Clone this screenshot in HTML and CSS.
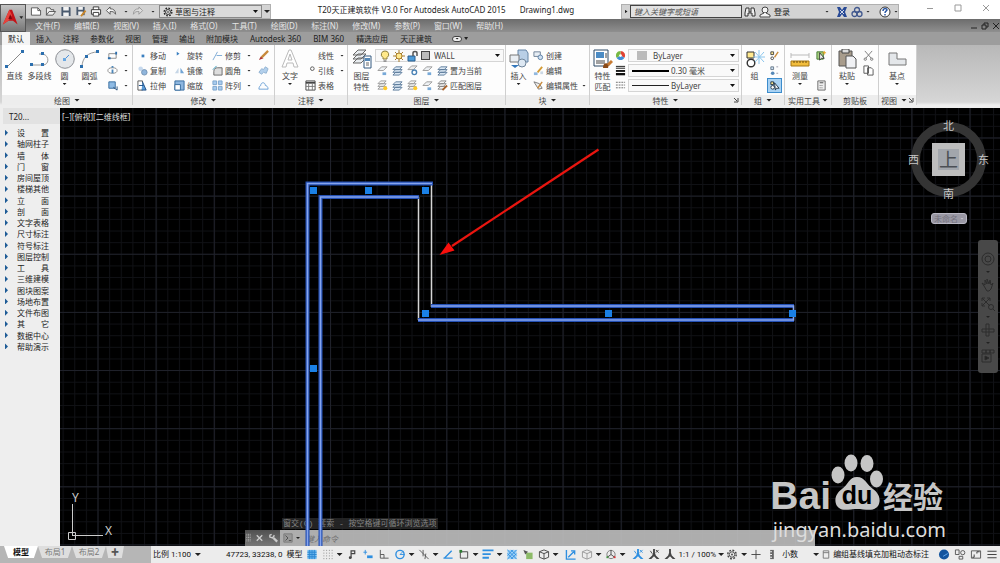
FILE: index.html
```html
<!DOCTYPE html>
<html lang="zh-CN">
<head>
  <meta charset="UTF-8" />
  <meta name="viewport" content="width=device-width, initial-scale=1.0" />
  <title>T20天正建筑软件 V3.0 - Drawing1.dwg</title>
  <link rel="stylesheet" href="styles.css">
</head>
<body>
  <!-- Icon sprite -->
  <svg class="sprite" aria-hidden="true">
    <symbol id="new" viewBox="0 0 12 12"><path d="M1 2h7l3 3v5H1z" fill="#fff" stroke="#555"/><path d="M8 2v3h3" fill="none" stroke="#555"/></symbol>
    <symbol id="open" viewBox="0 0 12 12"><path d="M1 10V2h4l1 2h3v2M1 10l3-4h7l-3 4z" fill="#eee" stroke="#555"/></symbol>
    <symbol id="save" viewBox="0 0 12 12"><path d="M1 1h9l1 1v9H1z" fill="#4a5a6e"/><path d="M3 1h6v4H3zM3 7h6v4H3z" fill="#f2f2f2"/></symbol>
    <symbol id="saveas" viewBox="0 0 12 12"><path d="M1 1h9v9H1z" fill="#4a5a6e"/><path d="M3 1h5v3H3zM3 6h5v4H3z" fill="#f2f2f2"/><path d="M6 11l5-6" stroke="#c8862a" stroke-width="2"/></symbol>
    <symbol id="print" viewBox="0 0 12 12"><path d="M3 4V1h6v3M1 4h10v5H1z" fill="#fff" stroke="#333"/><path d="M3 7h6v4H3z" fill="#fff" stroke="#333"/></symbol>
    <symbol id="undo" viewBox="0 0 12 12"><path d="M1 5l4-4v2c4 0 6 2 6 6-2-3-3-3-6-3v3z" fill="#f4f4f4" stroke="#555"/></symbol>
    <symbol id="redo" viewBox="0 0 12 12"><path d="M11 5L7 1v2C3 3 1 5 1 9c2-3 3-3 6-3v3z" fill="#ddd" stroke="#999"/></symbol>
    <symbol id="gear" viewBox="0 0 12 12"><circle cx="6" cy="6" r="4.600" fill="none" stroke="currentColor" stroke-width="1.600" stroke-dasharray="2 1.600"/><circle cx="6" cy="6" r="3" fill="none" stroke="currentColor"/><circle cx="6" cy="6" r="1" fill="currentColor"/></symbol>
    <symbol id="find" viewBox="0 0 12 12"><path d="M2 2h3v4h2V2h3l1 5v3H8V7H4v3H1V7z" fill="#eee" stroke="#333"/></symbol>
    <symbol id="user" viewBox="0 0 12 12"><circle cx="6" cy="4" r="3" fill="#f5f5f5" stroke="#444"/><path d="M5 7L1 9v2h10V9L7 7" fill="#f5f5f5" stroke="#444"/></symbol>
    <symbol id="exchange" viewBox="0 0 12 12"><path d="M1 1h3l2 3 2-3h3L9 6l2 5H8L6 8l-2 3H1l2-5z" fill="#284a96"/><path d="M4 4l4 4M8 4L4 8" stroke="#cfd8ea"/></symbol>
    <symbol id="a360" viewBox="0 0 12 12"><g fill="none" stroke="#41588e" stroke-width="1.300"><circle cx="6" cy="4" r="2.500"/><circle cx="3.500" cy="8" r="2.500"/><circle cx="8.500" cy="8" r="2.500"/></g></symbol>
    <symbol id="help" viewBox="0 0 12 12"><circle cx="6" cy="6" r="5" fill="#fff" stroke="#333"/><path d="M4 5c0-3 4-3 4-1 0 1-2 1-2 3M6 8v1.500" fill="none" stroke="#2451a0" stroke-width="1.400"/></symbol>

    <symbol id="line" viewBox="0 0 20 20"><path d="M2 18L18 2" stroke="#888" fill="none"/><path d="M0 16h3v3H0zM16 1h3v3h-3z" fill="#2c6fae"/></symbol>
    <symbol id="pline" viewBox="0 0 20 20"><path d="M1 16h12c6 0 7-9 0-11H9" stroke="#999" fill="none"/><path d="M0 14h3v3H0zM11 14h3v3h-3zM11 3h3v3h-3z" fill="#2c6fae"/></symbol>
    <symbol id="circle" viewBox="0 0 20 20"><circle cx="10" cy="10" r="9.300" fill="#e4e7ea" stroke="#8c8f94"/><path d="M9 11l5-5" stroke="#4a90d9"/><path d="M8 9h3v3H8z" fill="#69a7e2"/></symbol>
    <symbol id="arc" viewBox="0 0 20 20"><path d="M2 18C2 9 8 3 18 3" stroke="#999" fill="none"/><path d="M0 16h3v3H0zM5 6h3v3H5zM16 1h3v3h-3z" fill="#2c6fae"/></symbol>
    <symbol id="rect" viewBox="0 0 12 12"><path d="M2 4h8v5H2z" fill="#fff" stroke="#888"/><path d="M1 8h3v2H1zM9 2h2v3H9z" fill="#2c6fae"/></symbol>
    <symbol id="ellipse" viewBox="0 0 12 12"><ellipse cx="6" cy="6" rx="5" ry="3" fill="#fff" stroke="#888"/><path d="M5 5h2v4H5zM5 1h2v2H5z" fill="#4c86b8"/></symbol>
    <symbol id="hatch" viewBox="0 0 12 12"><path d="M2 2h7v7H2z" fill="#8fbbe4" stroke="#356a9c"/><path d="M7 8l4 3v-4" stroke="#234e79" fill="none"/></symbol>

    <symbol id="move" viewBox="0 0 12 12"><path d="M5 5h3v3H5z" fill="#3a7fc0"/></symbol>
    <symbol id="copy" viewBox="0 0 12 12"><circle cx="4" cy="4" r="2.500" fill="#c6d9ee"/><circle cx="8" cy="8" r="3" fill="#8fb5dc" stroke="#7493b2"/></symbol>
    <symbol id="stretch" viewBox="0 0 12 12"><path d="M1 1h5v10H1z" fill="#fff" stroke="#555"/><path d="M6 2l4 9H5M2 6h5" fill="#5a9ad6" stroke="#1e4f86"/></symbol>
    <symbol id="rotate" viewBox="0 0 12 12"><path d="M3 2l3 2-3 2" fill="#3a7fc0"/></symbol>
    <symbol id="mirror" viewBox="0 0 12 12"><path d="M5 3v6H1z" fill="#c6d6e6"/><path d="M7 3v6h4z" fill="#72a5d5"/></symbol>
    <symbol id="scale" viewBox="0 0 12 12"><path d="M1 1h10v10H1z" fill="#8db6df" stroke="#356a9c"/><path d="M1 5h6v6H1z" fill="#fff" stroke="#356a9c"/></symbol>
    <symbol id="trim" viewBox="0 0 12 12"><path d="M1 11L6 2M5 6h6" stroke="#79a8d4" fill="none"/></symbol>
    <symbol id="fillet" viewBox="0 0 12 12"><path d="M2 11V7c0-3 2-4 4-4h5v8z" fill="#ddd" stroke="#666"/><path d="M1 5l4-4" stroke="#39b"/></symbol>
    <symbol id="array" viewBox="0 0 12 12"><path d="M1 1h4v4H1zM7 1h4v4H7zM1 7h4v4H1zM7 7h4v4H7z" fill="#a8cbee" stroke="#7aa3cc"/></symbol>
    <symbol id="erase" viewBox="0 0 12 12"><path d="M1 11l2-4 3 2z" fill="#a33"/><path d="M4 8l7-7" stroke="#c88a3c" stroke-width="2.500"/></symbol>
    <symbol id="explode" viewBox="0 0 12 12"><path d="M1 8l3-4 2 1 2-3 3 2-2 5-3-1-2 2z" fill="#b3d0ec" stroke="#8fb0d0"/></symbol>
    <symbol id="offset" viewBox="0 0 12 12"><path d="M1 10h10c0-3-2-4-3-4 0-4-5-4-5 0-1 0-2 2-2 4z" fill="none" stroke="#6aa0d5"/></symbol>

    <symbol id="text" viewBox="0 0 20 20"><path d="M2 18L9 1h2l7 17h-4l-1-4H7l-1 4zM8 11h4l-2-6z" fill="#fff" stroke="#bbb"/></symbol>
    <symbol id="leader" viewBox="0 0 12 12"><circle cx="8" cy="4" r="2" fill="none" stroke="#555"/></symbol>
    <symbol id="table" viewBox="0 0 12 12"><path d="M1 1h10v10H1z" fill="#fff" stroke="#444"/><path d="M1 2h10v2H1z" fill="#444"/><path d="M1 7h10M4 4v7M8 4v7" stroke="#777"/></symbol>

    <symbol id="layers" viewBox="0 0 20 20"><path d="M1 6l5-5h8l-5 5zM1 10l5-5h8l-5 5zM1 14l5-5h8l-5 5z" fill="#e9edf0" stroke="#666"/><path d="M12 7h7v12h-7z" fill="#fff" stroke="#355b80"/><path d="M13 9h5v3h-5z" fill="#5589b9"/><path d="M14 14h3M14 16h3" stroke="#666"/></symbol>
    <symbol id="bulb" viewBox="0 0 12 12"><path d="M6 1a3.500 3.500 0 0 0-2 6.500V9h4V7.500A3.500 3.500 0 0 0 6 1z" fill="#ffe98a" stroke="#8a7d3c"/><path d="M4.500 11h3" stroke="#555"/></symbol>
    <symbol id="sun" viewBox="0 0 12 12"><path d="M6 0v12M0 6h12M2 2l8 8M10 2l-8 8" stroke="#a87e2e"/><circle cx="6" cy="6" r="3" fill="#ffe88d" stroke="#a87e2e"/></symbol>
    <symbol id="lock" viewBox="0 0 12 12"><path d="M1 6h7v5H1z" fill="#4d9bd8" stroke="#2b5f8f"/><path d="M6 6V3c0-2 4-2 4 0v3" fill="none" stroke="#555" stroke-width="1.500"/></symbol>
    <symbol id="layer" viewBox="0 0 12 12"><path d="M1 6l4-4h6L7 6z" fill="#eef1f4" stroke="#999"/><path d="M6 8h4v3H6z" fill="#77a9d8"/></symbol>
    <symbol id="layerset" viewBox="0 0 12 12"><path d="M1 5l3-3h7L8 5zM1 8l3-3h7L8 8zM1 11l3-3h7l-3 3z" fill="#dce8f4" stroke="#5c7b9a"/></symbol>
    <symbol id="layersun" viewBox="0 0 12 12"><path d="M1 4l3-3h6L7 4zM1 7l3-3h6L7 7zM1 10l3-3h6l-3 3z" fill="#f3f3f3" stroke="#999"/><circle cx="9" cy="9" r="2.200" fill="#ffc928"/></symbol>
    <symbol id="layerbrush" viewBox="0 0 12 12"><path d="M1 4l3-3h6L7 4zM1 7l3-3h6L7 7zM1 10l3-3h6l-3 3z" fill="#f3f3f3" stroke="#888"/><path d="M6 11l5-5" stroke="#a8622a" stroke-width="2"/></symbol>
    <symbol id="layergear" viewBox="0 0 12 12"><path d="M1 5l4-4h6L7 5z" fill="#eee" stroke="#999"/><circle cx="8" cy="8" r="2.500" fill="#fff" stroke="#4a82b5" stroke-width="1.500"/></symbol>

    <symbol id="insert" viewBox="0 0 20 20"><path d="M9 1h8l2 3v9H9z" fill="#b9cfe6" stroke="#6584a5"/><path d="M1 6h9v7H1z" fill="#e9eef3" stroke="#777"/><circle cx="13" cy="14" r="4" fill="#dde8f3" stroke="#70859b"/><path d="M6 19l-4-3h8z" fill="#3377bb"/></symbol>
    <symbol id="create" viewBox="0 0 12 12"><path d="M1 2h7v5H1z" fill="#e6edf4" stroke="#6b7f95"/><circle cx="8" cy="8" r="2.500" fill="#cfe0f1" stroke="#5a7fa5"/></symbol>
    <symbol id="edit" viewBox="0 0 12 12"><path d="M1 8h4v3H1z" fill="#91b8df"/><path d="M5 8l5-6" stroke="#d39b35" stroke-width="2"/><path d="M8 7h3v3H8z" fill="#ccd9e6"/></symbol>
    <symbol id="attr" viewBox="0 0 12 12"><path d="M1 2l6 2 3 5-4 1z" fill="#eee" stroke="#777"/><path d="M5 9l5-7" stroke="#c88a3c" stroke-width="1.500"/></symbol>

    <symbol id="match" viewBox="0 0 20 20"><path d="M1 1h14v16H1z" fill="#fff" stroke="#2d4864"/><path d="M3 3h8v6H3z" fill="#4b8bc4"/><path d="M3 12h9M3 14h9M13 4v5" stroke="#444"/><path d="M10 19c0-4 2-6 6-4l-1 4z" fill="#8a4a18"/><path d="M15 16l4-4" stroke="#c87a31" stroke-width="3"/></symbol>
    <symbol id="wheel" viewBox="0 0 12 12"><path d="M6 6V1a5 5 0 0 1 4.300 7.500z" fill="#e04334"/><path d="M6 6l4.300 2.500A5 5 0 0 1 1.700 8.500z" fill="#3f8ed8"/><path d="M6 6L1.700 8.500A5 5 0 0 1 6 1z" fill="#77b843"/><circle cx="6" cy="6" r="1.500" fill="#fff"/></symbol>
    <symbol id="weights" viewBox="0 0 12 12"><path d="M1 1.500h10M1 3.500h10" stroke="#111"/><path d="M1 6.500h10" stroke="#111" stroke-width="2"/><path d="M1 10h10" stroke="#111" stroke-width="2.500"/></symbol>
    <symbol id="dashes" viewBox="0 0 12 12"><path d="M1 2.500h10M1 5.500h10M1 8.500h10" stroke="#666" stroke-dasharray="2 1"/></symbol>

    <symbol id="group" viewBox="0 0 20 20"><path d="M2 3h7v6H2z" fill="#ffe98f" stroke="#333"/><circle cx="6" cy="14" r="3.800" fill="#fff" stroke="#333" stroke-width="1.400"/><path d="M14 1v14M8 8h12M10 3l9 10M19 3l-9 10" stroke="#8cc6ec"/></symbol>
    <symbol id="ungroup" viewBox="0 0 12 12"><path d="M2 2h3v3H2z" fill="#ffe98f" stroke="#444"/><circle cx="3.500" cy="9" r="1.500" fill="none" stroke="#444"/><path d="M6 8l4-6" stroke="#c88a3c" stroke-width="1.500"/></symbol>
    <symbol id="groupedit" viewBox="0 0 12 12"><path d="M2 2h3v3H2z" fill="#cfe0f1" stroke="#678"/><circle cx="4" cy="9" r="2" fill="#5588b8"/><path d="M8 2h2M8 9h2" stroke="#99a"/></symbol>
    <symbol id="groupsel" viewBox="0 0 12 12"><path d="M2 2h3v3H2z" fill="#ffe98f" stroke="#234"/><circle cx="4" cy="8" r="2" fill="#fff" stroke="#234"/><path d="M6 3l5 6H8l-1 2z" fill="#fff" stroke="#234"/></symbol>
    <symbol id="measure" viewBox="0 0 20 20"><path d="M1 4v5M19 4v5M1 6h18" stroke="#bbb"/><path d="M1 12h18v5H1z" fill="#f2bd3c" stroke="#a77816"/><path d="M4 12v2M7 12v2M10 12v2M13 12v2M16 12v2" stroke="#6b4c0e"/></symbol>
    <symbol id="quick" viewBox="0 0 12 12"><path d="M1 2h7v8H1z" fill="#a9cf83" stroke="#3e7a2c"/><path d="M4 3l5 6H6l-2 2z" fill="#fff" stroke="#333"/><path d="M9 1v4M7 3h4" stroke="#e6a21a"/></symbol>
    <symbol id="calc" viewBox="0 0 12 12"><path d="M2 1h8v10H2z" fill="#eee" stroke="#666"/><path d="M4 3h4" stroke="#444"/><path d="M4 6h4M4 8.500h4" stroke="#666" stroke-dasharray="1 1"/></symbol>
    <symbol id="paste" viewBox="0 0 20 20"><path d="M2 2h13v15H2z" fill="#a89c8c" stroke="#555"/><path d="M5 0h7v4H5z" fill="#ddd" stroke="#444"/><path d="M9 7h7l3 3v9H9z" fill="#f0f1f4" stroke="#555"/></symbol>
    <symbol id="cut" viewBox="0 0 12 12"><path d="M2 1l7 8M10 1L3 9" stroke="#777" fill="none"/><circle cx="2.500" cy="10" r="1.300" fill="none" stroke="#777"/><circle cx="9.500" cy="10" r="1.300" fill="none" stroke="#777"/></symbol>
    <symbol id="copyclip" viewBox="0 0 12 12"><path d="M1 1h5v8H1zM5 3h4l2 2v6H5z" fill="#fff" stroke="#555"/></symbol>
    <symbol id="base" viewBox="0 0 20 20"><path d="M2 4h8v6h9v6H2z" fill="#e4e7ea" stroke="#777"/></symbol>

    <symbol id="s-grid" viewBox="0 0 12 12"><path d="M1 1h10v10H1z" fill="#6fbaf0"/><path d="M1 3.500h10M1 6h10M1 8.500h10M3.500 1v10M6 1v10M8.500 1v10" stroke="#2a86d0"/></symbol>
    <symbol id="s-snap" viewBox="0 0 12 12"><path d="M1 1.500h10M1 4.500h10M1 7.500h10M1 10.500h10" stroke="#888" stroke-dasharray="1 2"/></symbol>
    <symbol id="s-infer" viewBox="0 0 12 12"><path d="M5 10V2h4v3H5" fill="none" stroke="#444" stroke-width="1.300"/><circle cx="4" cy="9.500" r="1.500" fill="#444"/></symbol>
    <symbol id="s-dyn" viewBox="0 0 12 12"><path d="M3 1v5M1 3.500h4" stroke="#2f8fe0"/><path d="M5 7h6v3H5z" fill="#2f8fe0"/></symbol>
    <symbol id="s-ortho" viewBox="0 0 12 12"><path d="M2 1v9h9M2 6h4v4" fill="none" stroke="#555"/></symbol>
    <symbol id="s-polar" viewBox="0 0 12 12"><circle cx="6" cy="6" r="4.500" fill="none" stroke="#2f8fe0" stroke-width="1.500"/><path d="M6 6h5M6 6l4-4" stroke="#2f8fe0"/></symbol>
    <symbol id="s-iso" viewBox="0 0 12 12"><path d="M1 1l10 10M5 1v7M7 11l1-6" stroke="#555" fill="none"/></symbol>
    <symbol id="s-track" viewBox="0 0 12 12"><path d="M1 10h10M2 10l8-8" stroke="#2f8fe0" stroke-width="1.500"/></symbol>
    <symbol id="s-osnap" viewBox="0 0 12 12"><path d="M2 3h8v7H2z" fill="none" stroke="#444"/><path d="M1 1h3v3H1z" fill="#2e7d32"/></symbol>
    <symbol id="s-lwt" viewBox="0 0 12 12"><path d="M0 1.500h12M0 5.500h9M0 9.500h7" stroke="#2f8fe0" stroke-width="2"/></symbol>
    <symbol id="s-trans" viewBox="0 0 12 12"><path d="M1 1h10v10H1z" fill="#9ed0f5"/><path d="M1 1l10 10M5 1l6 6M1 5l6 6M11 1L1 11M7 1L1 7M11 5l-6 6" stroke="#2f8fe0"/></symbol>
    <symbol id="s-cycle" viewBox="0 0 12 12"><path d="M4 4h7v7H4z" fill="#8dbb68"/><path d="M1 1l5 2-3 3z" fill="#555"/></symbol>
    <symbol id="s-3d" viewBox="0 0 12 12"><path d="M6 1l5 2v6l-5 2-5-2V3zM1 3l5 2 5-2M6 5v6" fill="none" stroke="currentColor"/></symbol>
    <symbol id="s-ucs" viewBox="0 0 12 12"><path d="M1 1v10h10M3 9l6-6M6 2h4v4" fill="none" stroke="#2f8fe0" stroke-width="1.500"/></symbol>
    <symbol id="s-gizmo" viewBox="0 0 12 12"><circle cx="6" cy="6" r="4.500" fill="none" stroke="#777"/><path d="M6 6V1M6 6l4 3M6 6L2 9" stroke="#444"/><path d="M9 8h2v2H9z" fill="#d33"/><path d="M1 8h2v2H1z" fill="#494"/></symbol>
    <symbol id="s-man" viewBox="0 0 12 12"><path d="M5 0h2v4l1 3 4 4H9L6 8l-3 3H0l4-4 1-3z" fill="currentColor"/></symbol>
    <symbol id="s-manx" viewBox="0 0 12 12"><path d="M5 0h2v4l1 3 4 4H9L6 8l-3 3H0l4-4 1-3z" fill="currentColor"/><path d="M8 1l3 3M11 1L8 4M2 2l2 3" stroke="currentColor"/></symbol>
    <symbol id="s-units" viewBox="0 0 12 12"><path d="M4 1h4v10H4z" fill="#666"/><path d="M4 3h2M4 6h2M4 9h2" stroke="#fff"/></symbol>
    <symbol id="s-props" viewBox="0 0 12 12"><path d="M3 2h6v8H3zM3 4h6" fill="#eee" stroke="#777"/></symbol>
    <symbol id="s-hw" viewBox="0 0 12 12"><circle cx="6" cy="6" r="5.500" fill="#14559f"/><path d="M5 8l5-3" stroke="#6aaef0"/></symbol>
    <symbol id="s-isolate" viewBox="0 0 12 12"><path d="M1 1h4v5H1zM5 8h4v3H5z" fill="none" stroke="#555"/><circle cx="9" cy="4" r="2.300" fill="none" stroke="#555"/></symbol>
    <symbol id="s-full" viewBox="0 0 12 12"><path d="M1 2h10v8H1z" fill="none" stroke="#555"/><path d="M7 5V3h3M4 6v3H2" stroke="#333" fill="none"/></symbol>
    <symbol id="s-menu" viewBox="0 0 12 12"><path d="M1 2.500h10M1 6h10M1 9.500h10" stroke="#444" stroke-width="1.200"/></symbol>
  </svg>

  <header>
    <button class="app" aria-label="应用程序"><svg viewBox="0 0 26 26"><path d="M2 20L9 4h3l6 16-5-4H8z" fill="#c41318"/><path d="M9 4l3 6-4 6-6 4z" fill="#e8433c"/><path d="M8 14h4l-2-5z" fill="#7a0b10"/><path d="M20 11h4l-2 3z" fill="#222"/></svg></button>
    <div class="titlebar">
      <div class="quick">
        <button aria-label="新建"><svg><use href="#new"/></svg></button>
        <button aria-label="打开"><svg><use href="#open"/></svg></button>
        <button aria-label="保存"><svg><use href="#save"/></svg></button>
        <button aria-label="另存为"><svg><use href="#saveas"/></svg></button>
        <button aria-label="打印"><svg><use href="#print"/></svg></button>
        <button aria-label="放弃"><svg><use href="#undo"/></svg></button>
        <i class="arrow small"></i>
        <button aria-label="重做"><svg><use href="#redo"/></svg></button>
        <i class="arrow small"></i>
        <label class="combo workspace"><svg><use href="#gear"/></svg><select aria-label="工作空间"><option>草图与注释</option></select></label>
        <i class="arrow"></i>
      </div>
      <h1><span>T20天正建筑软件 V3.0 For Autodesk AutoCAD 2015</span><span>Drawing1.dwg</span></h1>
      <div class="search">
        <button class="expand" aria-label="展开"></button>
        <input type="text" placeholder="键入关键字或短语" aria-label="搜索">
        <div class="account">
          <svg><use href="#find"/></svg>
          <svg><use href="#user"/></svg>
          <button class="signin">登录<i class="arrow small"></i></button>
          <svg><use href="#exchange"/></svg>
          <svg><use href="#a360"/></svg><i class="arrow small"></i>
          <svg class="help"><use href="#help"/></svg><i class="arrow small"></i>
        </div>
      </div>
      <div class="window">
        <button aria-label="最小化"><svg viewBox="0 0 8 8"><path d="M1 4.500h6"/></svg></button>
        <button aria-label="最大化"><svg viewBox="0 0 8 8"><path d="M1 1h6v6H1z"/></svg></button>
        <button aria-label="关闭"><svg viewBox="0 0 8 8"><path d="M1 1l6 6M7 1L1 7"/></svg></button>
      </div>
    </div>
    <nav class="menu">
      <a href="#">文件(F)</a><a href="#">编辑(E)</a><a href="#">视图(V)</a><a href="#">插入(I)</a><a href="#">格式(O)</a><a href="#">工具(T)</a><a href="#">绘图(D)</a><a href="#">标注(N)</a><a href="#">修改(M)</a><a href="#">参数(P)</a><a href="#">窗口(W)</a><a href="#">帮助(H)</a>
      <div class="doc">
        <svg viewBox="0 0 8 8"><path d="M1 6h6"/></svg>
        <svg viewBox="0 0 8 8"><path d="M3 3V1h4v4H5M1 3h4v4H1z"/></svg>
        <svg viewBox="0 0 8 8"><path d="M1 1l6 6M7 1L1 7"/></svg>
      </div>
    </nav>
  </header>

  <nav class="tabs">
    <a class="active" href="#">默认</a><a href="#">插入</a><a href="#">注释</a><a href="#">参数化</a><a href="#">视图</a><a href="#">管理</a><a href="#">输出</a><a href="#">附加模块</a><a href="#">Autodesk 360</a><a href="#">BIM 360</a><a href="#">精选应用</a><a href="#">天正建筑</a>
    <button class="pill" aria-label="功能区选项"><i class="arrow"></i></button><i class="arrow"></i>
  </nav>

  <div class="ribbon">
    <section class="panel draw">
      <div class="tools">
        <button class="big"><svg><use href="#line"/></svg>直线</button>
        <button class="big"><svg><use href="#pline"/></svg>多段线</button>
        <button class="big"><svg><use href="#circle"/></svg>圆<i class="arrow small"></i></button>
        <button class="big"><svg><use href="#arc"/></svg>圆弧<i class="arrow small"></i></button>
        <div class="grid">
          <button aria-label="矩形"><svg><use href="#rect"/></svg><i class="arrow small"></i></button>
          <button aria-label="椭圆"><svg><use href="#ellipse"/></svg><i class="arrow small"></i></button>
          <button aria-label="图案填充"><svg><use href="#hatch"/></svg><i class="arrow small"></i></button>
        </div>
      </div>
      <h2>绘图<i class="arrow"></i></h2>
    </section>

    <section class="panel modify">
      <div class="tools">
        <div class="grid">
          <button><svg><use href="#move"/></svg>移动</button>
          <button><svg><use href="#copy"/></svg>复制</button>
          <button><svg><use href="#stretch"/></svg>拉伸</button>
          <button><svg><use href="#rotate"/></svg>旋转</button>
          <button><svg><use href="#mirror"/></svg>镜像</button>
          <button><svg><use href="#scale"/></svg>缩放</button>
          <button><svg><use href="#trim"/></svg>修剪<i class="arrow small"></i></button>
          <button><svg><use href="#fillet"/></svg>圆角<i class="arrow small"></i></button>
          <button><svg><use href="#array"/></svg>阵列<i class="arrow small"></i></button>
          <button aria-label="删除"><svg><use href="#erase"/></svg></button>
          <button aria-label="分解"><svg><use href="#explode"/></svg></button>
          <button aria-label="偏移"><svg><use href="#offset"/></svg></button>
        </div>
      </div>
      <h2>修改<i class="arrow"></i></h2>
    </section>

    <section class="panel annotate">
      <div class="tools">
        <button class="big"><svg><use href="#text"/></svg>文字<i class="arrow small"></i></button>
        <div class="grid">
          <button><svg></svg>线性<i class="arrow small"></i></button>
          <button><svg><use href="#leader"/></svg>引线<i class="arrow small"></i></button>
          <button><svg><use href="#table"/></svg>表格</button>
        </div>
      </div>
      <h2>注释<i class="arrow"></i></h2>
    </section>

    <section class="panel layer">
      <div class="tools">
        <button class="big"><svg><use href="#layers"/></svg>图层<br>特性</button>
        <div class="rows">
          <label class="combo"><svg><use href="#bulb"/></svg><svg><use href="#sun"/></svg><svg><use href="#lock"/></svg><b class="swatch"></b><select aria-label="图层"><option>WALL</option></select></label>
          <div class="row">
            <svg><use href="#layer"/></svg><svg><use href="#layerset"/></svg><svg><use href="#layergear"/></svg><svg><use href="#layer"/></svg>
            <button><svg><use href="#layerset"/></svg>置为当前</button>
          </div>
          <div class="row">
            <svg><use href="#layersun"/></svg><svg><use href="#layerset"/></svg><svg><use href="#layersun"/></svg><svg><use href="#layer"/></svg>
            <button><svg><use href="#layerbrush"/></svg>匹配图层</button>
          </div>
        </div>
      </div>
      <h2>图层<i class="arrow"></i></h2>
    </section>

    <section class="panel block">
      <div class="tools">
        <button class="big"><svg><use href="#insert"/></svg>插入<i class="arrow small"></i></button>
        <div class="grid">
          <button><svg><use href="#create"/></svg>创建</button>
          <button><svg><use href="#edit"/></svg>编辑</button>
          <button><svg><use href="#attr"/></svg>编辑属性<i class="arrow small"></i></button>
        </div>
      </div>
      <h2>块<i class="arrow"></i></h2>
    </section>

    <section class="panel props">
      <div class="tools">
        <button class="big"><svg><use href="#match"/></svg>特性<br>匹配</button>
        <div class="rows">
          <div class="row"><svg><use href="#wheel"/></svg><label class="combo"><b class="swatch plain"></b><select aria-label="颜色"><option>ByLayer</option></select></label></div>
          <div class="row"><svg><use href="#weights"/></svg><label class="combo"><b class="stroke thick"></b><select aria-label="线宽"><option>0.30 毫米</option></select></label></div>
          <div class="row"><svg><use href="#dashes"/></svg><label class="combo"><b class="stroke"></b><select aria-label="线型"><option>ByLayer</option></select></label></div>
        </div>
      </div>
      <h2>特性<i class="arrow"></i><svg class="launch" viewBox="0 0 6 6"><path d="M1 1l3 3M5 1v4H1"/></svg></h2>
    </section>

    <section class="panel group">
      <div class="tools">
        <button class="big"><svg><use href="#group"/></svg>组</button>
        <div class="grid">
          <button aria-label="解除编组"><svg><use href="#ungroup"/></svg></button>
          <button aria-label="组编辑"><svg><use href="#groupedit"/></svg></button>
          <button class="on" aria-label="组选择"><svg><use href="#groupsel"/></svg></button>
        </div>
      </div>
      <h2>组<i class="arrow"></i></h2>
    </section>

    <section class="panel util">
      <div class="tools">
        <button class="big"><svg><use href="#measure"/></svg>测量<i class="arrow small"></i></button>
        <div class="grid">
          <button aria-label="快速选择"><svg><use href="#quick"/></svg></button>
          <span></span>
          <button aria-label="计算器"><svg><use href="#calc"/></svg></button>
        </div>
      </div>
      <h2>实用工具<i class="arrow"></i></h2>
    </section>

    <section class="panel clip">
      <div class="tools">
        <button class="big"><svg><use href="#paste"/></svg>粘贴<i class="arrow small"></i></button>
        <div class="grid">
          <button aria-label="剪切"><svg><use href="#cut"/></svg></button>
          <button aria-label="复制剪裁"><svg><use href="#copyclip"/></svg></button>
        </div>
      </div>
      <h2>剪贴板</h2>
    </section>

    <section class="panel view">
      <div class="tools">
        <button class="big"><svg><use href="#base"/></svg>基点<i class="arrow small"></i></button>
      </div>
      <h2>视图<i class="arrow"></i><svg class="launch" viewBox="0 0 6 6"><path d="M1 1l3 3M5 1v4H1"/></svg></h2>
    </section>
  </div>

  <main>
    <aside>
      <h3>T20...</h3>
      <ul>
        <li>设　　置</li><li>轴网柱子</li><li>墙　　体</li><li>门　　窗</li><li>房间屋顶</li><li>楼梯其他</li><li>立　　面</li><li>剖　　面</li><li>文字表格</li><li>尺寸标注</li><li>符号标注</li><li>图层控制</li><li>工　　具</li><li>三维建模</li><li>图块图案</li><li>场地布置</li><li>文件布图</li><li>其　　它</li><li>数据中心</li><li>帮助演示</li>
      </ul>
    </aside>

    <div class="canvas">
      <svg class="drawing">
        <defs>
          <pattern id="minor" x="37.500" y="29.500" width="11.630" height="11.630" patternUnits="userSpaceOnUse"><path d="M0 .5h12M.5 0v12" stroke="#101115"/></pattern>
          <pattern id="major" x="37.500" y="29.500" width="58.130" height="58.130" patternUnits="userSpaceOnUse"><path d="M0 .5h59M.5 0v59" stroke="#1f212a"/></pattern>
        </defs>
        <rect width="100%" height="100%" fill="url(#minor)"/>
        <rect width="100%" height="100%" fill="url(#major)"/>
      </svg>
      <div class="vplabel">[−][俯视][二维线框]</div>

      <div class="compass">
        <span class="n">北</span><span class="w">西</span><button class="cube">上</button><span class="e">东</span><span class="s">南</span>
      </div>
      <button class="ucsname">未命名<i class="arrow small"></i></button>

      <div class="navbar">
        <svg viewBox="0 0 14 14"><circle cx="7" cy="7" r="6"/><circle cx="7" cy="7" r="3"/></svg>
        <i class="arrow small"></i>
        <svg viewBox="0 0 14 14"><path d="M3 8L1 5l3 2V2l2 4V1l2 5 1-4 1 5 2-2-2 6-2 2H6z"/></svg>
        <svg viewBox="0 0 14 14"><path d="M1 1l8 8M9 1L1 9M1 4V1h3M6 1h3v3M1 6v3h3"/><circle cx="10" cy="10" r="2.500"/><path d="M12 12l2 2"/></svg>
        <i class="arrow small"></i>
        <svg viewBox="0 0 14 14"><path d="M5 1h3v12H5zM1 6h12v3H1z"/></svg>
        <i class="arrow small"></i>
        <svg viewBox="0 0 14 14"><path d="M1 1h4v3H1zM5 1h4v3H5zM9 1h4v3H9zM1 5h9v8H1z"/><path d="M4 7l4 2-4 2z" fill="#222"/></svg>
      </div>

      <svg class="ucs" viewBox="0 0 60 60">
        <path d="M12.500 52V20M12 51.500h31M8.500 48.500h7v7h-7z"/>
        <text x="12" y="18">Y</text><text x="45" y="51">X</text>
      </svg>

      <div class="command">
        <p>窗交(C) 套索 - 按空格键可循环浏览选项</p>
        <div class="line">
          <div class="handle">
            <svg viewBox="0 0 6 12"><path d="M1 1v10M3 1v10M5 1v10" stroke-dasharray="1 1"/></svg>
            <svg viewBox="0 0 12 12"><path d="M3 3l6 6M9 3L3 9" stroke-width="1.500"/></svg>
            <svg viewBox="0 0 12 12"><path d="M6 6l4 4" stroke-width="2.500"/><path d="M4 2L2 3v2l3 1 2-3" stroke-width="1.500"/></svg>
          </div>
          <svg class="prompt" viewBox="0 0 12 12"><path d="M1 1h10v10H1z" fill="#999" stroke="#777"/><path d="M3 3l3 3-3 3M7 9h3" fill="none" stroke="#444"/></svg>
          <i class="arrow small"></i>
          <input type="text" placeholder="键入命令" aria-label="命令行">
        </div>
      </div>

      <svg class="drawing over">
        <!-- walls -->
        <g fill="none">
          <path d="M358.500 89v123M371.500 76v123" stroke="#d6d6d6" stroke-width="1.500"/>
          <g stroke="#2450b4" stroke-width="4"><path d="M247.500 438V75.500H373M260.500 438V89H359M371 198h363M358 212h376"/></g>
          <g stroke="#86a4ec" stroke-width="1.600"><path d="M247.500 438V75.500H372M260.500 438V89H358.500M371 198h362.500v14H358"/></g>
        </g>
        <!-- grips -->
        <path d="M250 79h7v7h-7zM305 79h7v7h-7zM362 79h7v7h-7zM362 202h7v7h-7zM545 202h7v7h-7zM729 202h7v7h-7zM250 257h7v7h-7z" fill="#1a80e6"/>
        <path d="M538.500 41.500L392 138" stroke="#e9150f" stroke-width="2.200"/>
        <path d="M379.500 147l9-12.500 6 8z" fill="#fa0f0c"/>
      </svg>

      <div class="watermark">
        <div class="logo">
          <span>Bai</span>
          <svg viewBox="0 0 52 56">
            <ellipse cx="7" cy="21" rx="6.500" ry="8.500"/><ellipse cx="20" cy="9" rx="6.500" ry="8.500"/><ellipse cx="36" cy="9.500" rx="6.500" ry="8.500"/><ellipse cx="45.500" cy="25" rx="6.500" ry="8.500"/>
            <path d="M26 23c-8 0-9 8-15 12-7 5-8 12-5 17 4 6 12 3 20 3s17 3 21-3c3-5 2-12-5-17-6-4-8-12-16-12z"/>
            <text x="26" y="50" text-anchor="middle">du</text>
          </svg>
          <span class="cn">经验</span>
        </div>
        <p>jingyan.baidu.com</p>
      </div>
    </div>
  </main>

  <footer>
    <nav class="layouts"><a class="active" href="#">模型</a><a href="#">布局1</a><a href="#">布局2</a><a class="add" href="#">✚</a></nav>
    <div class="status">
      <button class="scale">比例 1:100<i class="arrow"></i></button>
      <output>47723, 33238, 0</output>
      <button class="space">模型</button>
      <svg><use href="#s-grid"/></svg><svg><use href="#s-snap"/></svg><i class="arrow"></i>
      <svg><use href="#s-infer"/></svg><svg><use href="#s-dyn"/></svg><svg><use href="#s-ortho"/></svg><svg><use href="#s-polar"/></svg><i class="arrow"></i>
      <svg><use href="#s-iso"/></svg><i class="arrow"></i>
      <svg><use href="#s-track"/></svg><svg><use href="#s-osnap"/></svg><i class="arrow"></i>
      <svg><use href="#s-lwt"/></svg><i class="arrow"></i>
      <svg><use href="#s-trans"/></svg><svg><use href="#s-cycle"/></svg><svg><use href="#s-3d"/></svg><i class="arrow"></i>
      <svg class="gap"><use href="#s-ucs"/></svg><svg class="dim"><use href="#s-3d"/></svg><i class="arrow"></i>
      <svg><use href="#s-gizmo"/></svg><i class="arrow"></i>
      <svg class="gap blue"><use href="#s-manx"/></svg><svg><use href="#s-manx"/></svg><svg><use href="#s-man"/></svg>
      <button class="zoom">1:1 / 100%<i class="arrow"></i></button>
      <svg><use href="#gear"/></svg><i class="arrow"></i>
      <svg viewBox="0 0 12 12"><path d="M6 1v10M1 6h10" stroke="#444"/></svg>
      <svg><use href="#s-units"/></svg>
      <button class="units">小数<i class="arrow"></i></button>
      <svg class="narrow"><use href="#s-props"/></svg>
      <span>编组基线填充加粗动态标注</span>
      <div class="end"><svg><use href="#s-hw"/></svg><svg><use href="#s-isolate"/></svg><svg><use href="#s-full"/></svg><svg><use href="#s-menu"/></svg></div>
    </div>
  </footer>
</body>
</html>
```

FILE: styles.css
```css
* { box-sizing: border-box; }
html, body { height: 100%; }
body { display: flex; flex-direction: column; margin: 0; overflow: hidden; background: #ececec; color: #222; font: 8px/11px "Noto Sans", "Noto Sans CJK SC", sans-serif; }
h1, h2, h3, p, ul { margin: 0; padding: 0; font: inherit; list-style: none; }
a { color: inherit; text-decoration: none; }
button, input, select { margin: 0; padding: 0; border: 0; border-radius: 0; background: none; color: inherit; font: inherit; outline: none; white-space: nowrap; }
select { appearance: none; flex: 1; min-width: 0; }
svg { flex: none; width: 12px; height: 12px; }
.sprite { position: absolute; width: 0; height: 0; }
.arrow { display: block; flex: none; width: 6px; height: 3px; background: #222; clip-path: polygon(0 0, 100% 0, 50% 100%); }
.arrow.small { width: 4px; height: 2px; }

/* title bar */
header { display: grid; grid-template-columns: 26px 1fr; grid-template-rows: 19px 13px; background: #fff; }
.app { grid-row: 1 / 3; align-self: end; height: 28px; background: linear-gradient(#c4c4c4, #777); border: 1px solid #555; }
.app svg { display: block; width: 24px; height: 26px; }
.titlebar { display: flex; align-items: flex-end; }
.quick { display: flex; align-items: center; width: 245px; height: 15px; padding-left: 4px; background: #d3d3d3; border: 1px solid #b0b0b0; border-left: 0; }
.quick button { width: 15px; height: 12px; }
.quick button svg { display: block; height: 11px; }
.quick .small { margin: 0 4px; }
.quick .combo { margin-right: 2px; }
.combo { display: flex; align-items: center; gap: 2px; height: 13px; padding: 0 3px; border: 1px solid #d5d5d5; background: #f9f9f9; }
.combo::after { content: ""; width: 5px; height: 3px; background: #111; clip-path: polygon(0 0, 100% 0, 50% 100%); }
.workspace { flex: 1; border-color: #888; background: #dadada; }
.workspace svg { width: 10px; height: 10px; }
h1 { display: flex; flex: 1; justify-content: center; gap: 14px; padding-bottom: 4px; white-space: nowrap; }
.search { display: flex; height: 15px; border: 1px solid #b0b0b0; background: #d3d3d3; }
.expand { width: 8px; display: flex; align-items: center; justify-content: center; }
.expand::before { content: ""; width: 3px; height: 4px; background: #222; clip-path: polygon(0 0, 100% 50%, 0 100%); }
.search input { width: 112px; padding-left: 3px; border: 1px solid #444; background: #e2e2e2; font-style: italic; }
::placeholder { color: #555; opacity: 1; }
.account { display: flex; align-items: center; width: 156px; gap: 3px; padding-left: 2px; }
.signin { display: flex; align-items: center; justify-content: space-between; flex: 1; margin-right: 4px; }
.help { margin-left: 6px; }
.window { display: flex; align-self: flex-start; margin-left: 17px; }
.window button { width: 28px; height: 16px; }
.window svg { display: block; width: 8px; height: 8px; margin: auto; fill: none; stroke: #999; }
.menu { display: flex; align-items: center; gap: 14px; padding-left: 9px; background: linear-gradient(#6c6c6c, #8f8f8f); color: #e6e6e6; }
.doc { display: flex; gap: 3px; margin-left: auto; }
.doc svg { width: 8px; height: 8px; fill: none; stroke: #222; }

/* ribbon */
.tabs { display: flex; align-items: center; height: 13px; padding-left: 2px; background: #9d9d9d; }
.tabs a { padding: 1px 5px 1px 6px; line-height: 12px; }
.tabs .active { padding-right: 6px; background: #f4f4f4; }
.tabs a:nth-child(n+8) { padding-right: 6px; }
.pill { width: 10px; height: 6px; margin: 0 2px 0 14px; border: 1px solid #444; border-radius: 3px; background: #eee; }
.pill .arrow { width: 4px; height: 2px; margin: auto; }
.tabs > .arrow { width: 4px; }
.ribbon { display: flex; height: 63px; padding-left: 2px; background: linear-gradient(#b8b8b8, #d6d6d6 57px, #eee 60px); }
.panel { display: flex; flex: none; flex-direction: column; height: 60px; border-right: 1px solid #cfcfcf; background: #fdfdfd; color: #444; }
.tools { display: flex; height: 50px; padding-top: 3px; }
.panel h2 { position: relative; display: flex; align-items: center; justify-content: center; gap: 4px; height: 10px; background: #ededed; white-space: nowrap; }
.launch { position: absolute; right: 2px; width: 6px; height: 6px; fill: none; stroke: #444; }
.big { display: flex; flex: none; flex-direction: column; align-items: center; width: 25px; line-height: 11px; }
.big svg { width: 20px; height: 20px; margin: 1px 0; }
.big .arrow { margin-top: 2px; }
.grid { display: grid; grid-template-rows: repeat(3, 15px); grid-auto-flow: column; }
.grid button, .row button { display: flex; align-items: center; gap: 2px; }
.grid svg, .row svg { width: 11px; height: 11px; }
.grid .arrow { margin-left: 4px; }
.rows { display: flex; flex: 1; flex-direction: column; }
.row { display: flex; align-items: center; gap: 4px; height: 15px; }
.draw { width: 131px; }
.draw .grid { margin-left: 5px; }
.modify { width: 142px; }
.modify .grid { grid-template-columns: 37px 38px 46px 12px; margin-left: 4px; }
.annotate { width: 73px; }
.annotate .big { width: 30px; }
.layer { width: 158px; }
.layer .big { width: 27px; }
.layer .combo { margin: 1px 1px 1px 0; }
.layer .combo select { margin-left: 2px; }
.layer .row { padding-left: 2px; }
.swatch { width: 9px; height: 9px; border: 1px solid #444; background: #bbb; }
.swatch.plain { width: 10px; margin: 0 4px 0 5px; border: 0; }
.block { width: 84px; }
.block .grid { margin-left: 2px; }
.block .grid .arrow { margin-left: 2px; }
.props { width: 152px; }
.props .row { gap: 2px; }
.props .combo { flex: 1; margin-right: 2px; }
.stroke { width: 37px; height: 1px; background: #222; }
.stroke.thick { height: 2px; background: #000; }
.group { width: 43px; }
.group .grid button { justify-content: center; width: 15px; }
.on { border: 1px solid #3c8ccc; background: #a9d2f3; }
.util { width: 47px; }
.util .big, .clip .big { width: 30px; }
.util h2 { gap: 2px; }
.clip { width: 47px; }
.util .grid, .clip .grid { margin-left: 1px; }
.view { width: 38px; }
.view .big { width: 36px; }
.view h2 { justify-content: flex-start; padding-left: 2px; }

/* side menu */
main { display: flex; flex: 1; min-height: 0; }
aside { width: 60px; background: #eee; }
aside h3 { height: 16px; padding: 3px 0 0 6px; background: #e2e2e2; border-left: 3px solid #eee; }
aside ul { display: grid; grid-auto-rows: 1fr; height: 225px; margin-top: 3px; }
aside li { display: flex; align-items: center; gap: 9px; padding-left: 5px; }
aside li::before { content: ""; width: 3px; height: 6px; background: #1d5b96; clip-path: polygon(0 0, 100% 50%, 0 100%); }

/* drawing area */
.canvas { position: relative; flex: 1; min-width: 0; overflow: hidden; background: #000; }
.drawing { position: absolute; width: 100%; height: 100%; }
.over { pointer-events: none; }
.vplabel { position: absolute; top: 3px; left: 2px; color: #ddd; }
.compass { position: absolute; top: 14px; right: 14px; width: 75px; height: 75px; border: 9px solid #343434; border-radius: 50%; color: #c8c8c8; font-size: 11px; line-height: 12px; }
.compass span { position: absolute; }
.compass .n { top: -11px; left: 23px; }
.compass .s { bottom: -12px; left: 23px; }
.compass .w { top: 23px; left: -12px; }
.compass .e { top: 23px; right: -12px; }
.cube { position: absolute; top: 12px; left: 12px; width: 33px; height: 33px; border: 6px solid #bdbdbd; background: #a2a6ac; color: #4b4f55; font-size: 19px; line-height: 20px; }
.ucsname { position: absolute; top: 105px; right: 33px; display: flex; align-items: center; justify-content: center; gap: 2px; width: 36px; height: 11px; border: 1px solid #bab8c4; border-radius: 3px; background: #9a98a4; color: #74727e; }
.ucsname .arrow { background: #c4c2cc; }
.navbar { position: absolute; top: 132px; right: 2px; display: flex; flex-direction: column; align-items: center; gap: 5px; width: 20px; height: 133px; padding-top: 12px; border-radius: 3px; background: #484848; }
.navbar svg { width: 14px; height: 14px; fill: none; stroke: #2c2c2c; }
.ucs { position: absolute; bottom: 2px; left: 0; width: 60px; height: 60px; fill: none; stroke: #ccc; }
.ucs text { fill: #ccc; stroke: none; font-size: 12px; }
.watermark { position: absolute; right: 54px; bottom: 4px; color: #c6c6c6; }
.logo { display: flex; align-items: flex-end; justify-content: flex-end; padding-right: 3px; font: bold 39px/44px "Liberation Sans", sans-serif; }
.logo svg { width: 52px; height: 56px; margin-bottom: 8px; fill: #c6c6c6; }
.logo text { fill: #000; font: bold 25px "Liberation Sans", sans-serif; }
.logo .cn { font: bold 30px/46px "Noto Sans CJK SC", sans-serif; }
.watermark p { color: #ddd; font: 20px/24px "Noto Sans", sans-serif; text-align: right; }
.command { position: absolute; bottom: 0; left: 185px; right: 185px; color: #858585; }
.command p { width: max-content; height: 11px; margin: 0 0 1px 37px; padding: 0 1px; background: #2c2c2ccc; font-family: "Liberation Mono", "Noto Sans CJK SC", monospace; }
.line { display: flex; align-items: center; gap: 3px; height: 16px; background: #c0c0c0e6; }
.handle { display: flex; align-items: center; gap: 3px; height: 16px; padding: 0 1px; background: linear-gradient(#505050, #777); }
.handle svg { width: 11px; fill: none; stroke: #ccc; }
.handle svg:first-child { width: 5px; }
.prompt { width: 10px; height: 10px; }
.line input { flex: 1; padding-left: 3px; font-style: italic; }
.line ::placeholder { color: #707070; }

/* status bar */
footer { display: flex; height: 17px; color: #111; }
.layouts { display: flex; flex: none; width: 151px; padding: 0 0 4px 4px; background: #b6b6b6; }
.layouts a { width: 34px; height: 12px; background: #dedede; color: #777; text-align: center; clip-path: polygon(0 0, 100% 0, 88% 100%, 12% 100%); }
.layouts .active { background: #fff; color: #111; font-weight: bold; }
.layouts .add { width: 18px; color: #555; }
.status { display: flex; flex: 1; align-items: center; min-width: 0; padding-left: 2px; font-family: Roboto, "Noto Sans CJK SC", sans-serif; white-space: nowrap; }
.status > * { flex: none; }
.status button { display: flex; align-items: center; gap: 4px; }
.status svg { width: 16px; height: 11px; color: #444; }
.status > .arrow { margin: 0 1px; }
.status .scale { width: 73px; }
.status .space { margin: 0 1px 0 4px; }
.status .gap { margin-left: 3px; }
.status .zoom { gap: 2px; margin-left: 1px; }
.status .blue { color: #2f8fe0; }
.status .dim { color: #999; }
.status .units { justify-content: space-between; width: 37px; margin-left: 2px; }
.status .narrow { width: 14px; }
.end { display: flex; margin-left: auto; }
```
